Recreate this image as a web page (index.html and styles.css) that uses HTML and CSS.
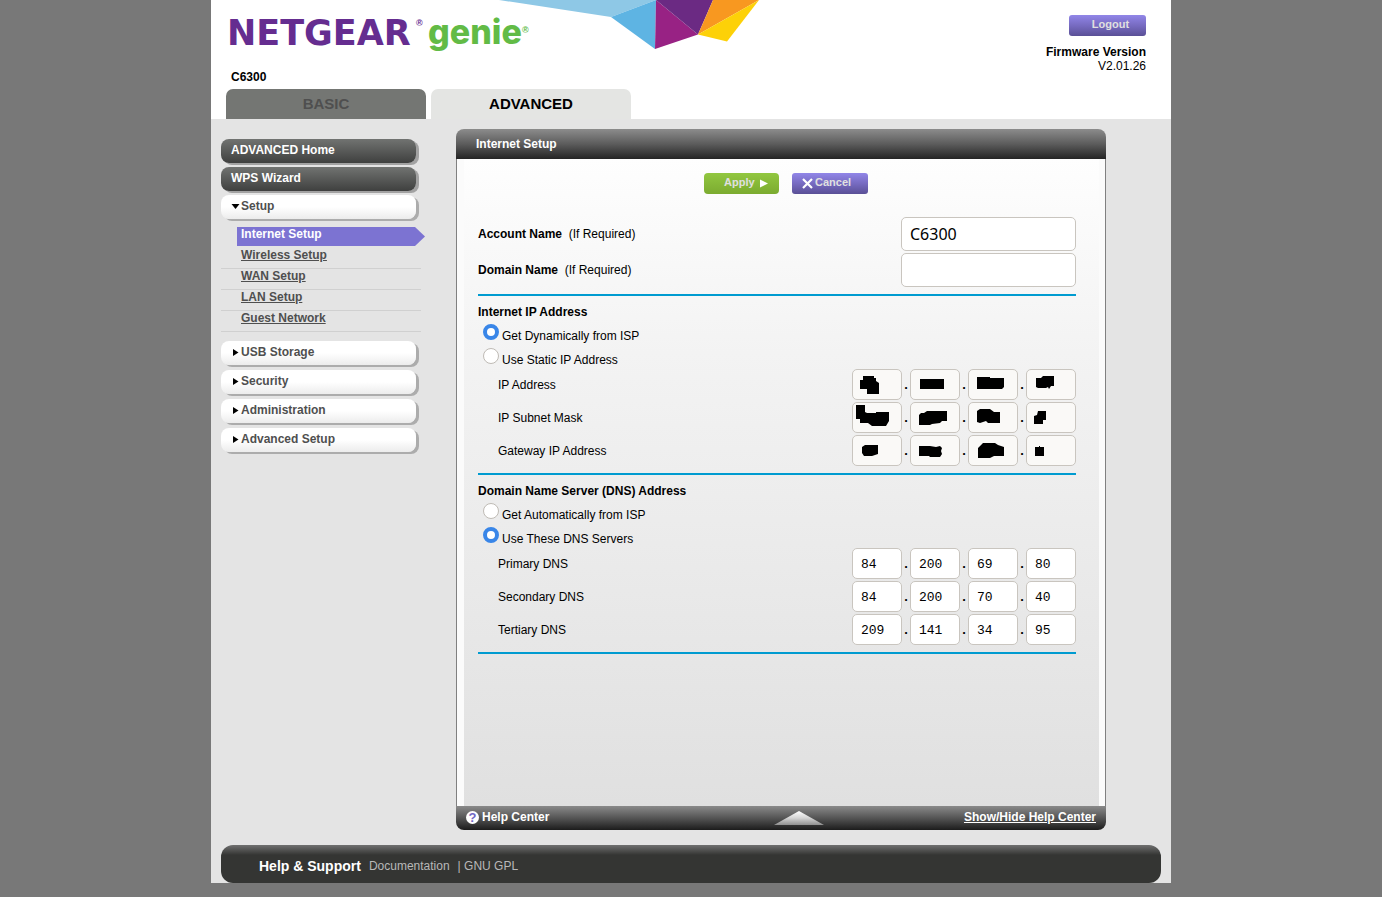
FILE: index.html
```html
<!DOCTYPE html>
<html lang="en">
<head>
<meta charset="utf-8">
<title>NETGEAR genie</title>
<link rel="stylesheet" href="styles.css">
</head>
<body>
<div class="page">
  <header class="header">
    <svg class="ribbon" width="260" height="49" viewBox="0 0 260 49" aria-hidden="true">
      <path fill="#8ec8e6" d="M0 0H157L112 17Z"/>
      <path fill="#5eb4e3" d="M112 17L157 0L156 49Z"/>
      <path fill="#982284" d="M157 0L199 34.500L156 49Z"/>
      <path fill="#6b2a83" d="M157 0H214L199 34.500Z"/>
      <path fill="#f89820" d="M214 0H260L199 34.500Z"/>
      <path fill="#fdd108" d="M260 0L228 41.500L199 34.500Z"/>
    </svg>
    <div class="brand">
      <svg class="logo" width="302" height="40" viewBox="0 0 302 40" role="img" aria-label="NETGEAR genie">
        <text class="logo-main" x="-4" y="29">NETGEAR</text>
        <text class="logo-reg logo-reg-main" x="185" y="10">®</text>
        <text class="logo-sub" x="197" y="28">genie</text>
        <text class="logo-reg logo-reg-sub" x="291" y="17">®</text>
      </svg>
      <div class="model">C6300</div>
    </div>
    <div class="session">
      <button class="btn btn-purple btn-logout" type="button">Logout</button>
      <div class="firmware"><b>Firmware Version</b><br>V2.01.26</div>
    </div>
    <nav class="tabs">
      <button class="tab" type="button">BASIC</button>
      <button class="tab tab-active" type="button">ADVANCED</button>
    </nav>
  </header>

  <div class="content">
    <nav class="side">
      <button class="side-btn side-dark" type="button">ADVANCED Home</button>
      <button class="side-btn side-dark" type="button">WPS Wizard</button>
      <button class="side-btn side-light" type="button"><svg class="caret" width="10" height="10" viewBox="0 0 10 10"><path d="M0.500 3H8.500L4.500 8Z"/></svg>Setup</button>
      <ul class="submenu">
        <li class="current"><a href="#internet">Internet Setup</a></li>
        <li><a href="#wireless">Wireless Setup</a></li>
        <li><a href="#wan">WAN Setup</a></li>
        <li><a href="#lan">LAN Setup</a></li>
        <li><a href="#guest">Guest Network</a></li>
      </ul>
      <button class="side-btn side-light" type="button"><svg class="caret" width="10" height="10" viewBox="0 0 10 10"><path d="M2 2L7.500 5.500L2 9Z"/></svg>USB Storage</button>
      <button class="side-btn side-light" type="button"><svg class="caret" width="10" height="10" viewBox="0 0 10 10"><path d="M2 2L7.500 5.500L2 9Z"/></svg>Security</button>
      <button class="side-btn side-light" type="button"><svg class="caret" width="10" height="10" viewBox="0 0 10 10"><path d="M2 2L7.500 5.500L2 9Z"/></svg>Administration</button>
      <button class="side-btn side-light" type="button"><svg class="caret" width="10" height="10" viewBox="0 0 10 10"><path d="M2 2L7.500 5.500L2 9Z"/></svg>Advanced Setup</button>
    </nav>

    <main class="panel">
      <h1 class="panel-head">Internet Setup</h1>
      <form class="panel-body">
        <div class="actions">
          <button class="btn btn-green" type="button">Apply<svg width="8" height="10" viewBox="0 0 8 10"><path fill="#fff" d="M0 0.500L8 4.500L0 8.500Z"/></svg></button>
          <button class="btn btn-purple btn-cancel" type="button"><svg width="11" height="11" viewBox="0 0 11 11"><path stroke="#fff" stroke-width="2.200" d="M1 1L10 10M10 1L1 10"/></svg>Cancel</button>
        </div>

        <section class="section names">
          <div class="row">
            <label for="account"><b>Account Name</b>&nbsp; (If Required)</label>
            <input class="text" id="account" type="text" value="C6300">
          </div>
          <div class="row">
            <label for="domain"><b>Domain Name</b>&nbsp; (If Required)</label>
            <input class="text" id="domain" type="text">
          </div>
        </section>

        <section class="section">
          <h2>Internet IP Address</h2>
          <div class="choice"><input type="radio" name="ip" id="ip-dyn" checked><label for="ip-dyn">Get Dynamically from ISP</label></div>
          <div class="choice"><input type="radio" name="ip" id="ip-static"><label for="ip-static">Use Static IP Address</label></div>
          <div class="rows">
            <div class="row">
              <label for="ip1">IP Address</label>
              <div class="octets">
                <span class="cell"><input id="ip1" type="text" disabled><svg viewBox="0 0 50 31"><path d="M11 7H22V9H24V12L27 14V25H15V20H8V11H11Z"/></svg></span><i>.</i>
                <span class="cell"><input type="text" aria-label="IP 2" disabled><svg viewBox="0 0 50 31"><path d="M10 10H34V20H10Z"/></svg></span><i>.</i>
                <span class="cell"><input type="text" aria-label="IP 3" disabled><svg viewBox="0 0 50 31"><path d="M9 8H22V9H36V18L34 20H9Z"/></svg></span><i>.</i>
                <span class="cell"><input type="text" aria-label="IP 4" disabled><svg viewBox="0 0 50 31"><path d="M10 9H15L17 7H28V17H25L23 20L22 18L20 19H12L10 18Z"/></svg></span>
              </div>
            </div>
            <div class="row">
              <label for="mask1">IP Subnet Mask</label>
              <div class="octets">
                <span class="cell"><input id="mask1" type="text" disabled><svg viewBox="0 0 50 31"><path d="M4 3H13V10L15 11H24V10H37V19L34 24H20L16 21H8V17H4Z"/></svg></span><i>.</i>
                <span class="cell"><input type="text" aria-label="Mask 2" disabled><svg viewBox="0 0 50 31"><path d="M9 13L11 11H14L17 9H37V19H32L30 21L22 22L20 23H9Z"/></svg></span><i>.</i>
                <span class="cell"><input type="text" aria-label="Mask 3" disabled><svg viewBox="0 0 50 31"><path d="M9 9L12 7H22L26 10H32V21H20L18 19L12 21L9 20Z"/></svg></span><i>.</i>
                <span class="cell"><input type="text" aria-label="Mask 4" disabled><svg viewBox="0 0 50 31"><path d="M12 9H20V18H17V22H8V14L11 13Z"/></svg></span>
              </div>
            </div>
            <div class="row">
              <label for="gw1">Gateway IP Address</label>
              <div class="octets">
                <span class="cell"><input id="gw1" type="text" disabled><svg viewBox="0 0 50 31"><path d="M10 12L13 10H26V19L20 21H12L10 18Z"/></svg></span><i>.</i>
                <span class="cell"><input type="text" aria-label="Gateway 2" disabled><svg viewBox="0 0 50 31"><path d="M9 11H20L26 12L30 11L32 13L31 16L32 19L30 22H20L19 21H9Z"/></svg></span><i>.</i>
                <span class="cell"><input type="text" aria-label="Gateway 3" disabled><svg viewBox="0 0 50 31"><path d="M10 13L15 8H27L30 10L36 12V21H26L22 23H10Z"/></svg></span><i>.</i>
                <span class="cell"><input type="text" aria-label="Gateway 4" disabled><svg viewBox="0 0 50 31"><path d="M9 12H13V11H14V12H18V21H9Z"/></svg></span>
              </div>
            </div>
          </div>
        </section>

        <section class="section">
          <h2>Domain Name Server (DNS) Address</h2>
          <div class="choice"><input type="radio" name="dns" id="dns-auto"><label for="dns-auto">Get Automatically from ISP</label></div>
          <div class="choice"><input type="radio" name="dns" id="dns-use" checked><label for="dns-use">Use These DNS Servers</label></div>
          <div class="rows">
            <div class="row">
              <label for="p1">Primary DNS</label>
              <div class="octets">
                <span class="cell"><input id="p1" type="text" value="84"></span><i>.</i>
                <span class="cell"><input type="text" aria-label="Primary 2" value="200"></span><i>.</i>
                <span class="cell"><input type="text" aria-label="Primary 3" value="69"></span><i>.</i>
                <span class="cell"><input type="text" aria-label="Primary 4" value="80"></span>
              </div>
            </div>
            <div class="row">
              <label for="s1">Secondary DNS</label>
              <div class="octets">
                <span class="cell"><input id="s1" type="text" value="84"></span><i>.</i>
                <span class="cell"><input type="text" aria-label="Secondary 2" value="200"></span><i>.</i>
                <span class="cell"><input type="text" aria-label="Secondary 3" value="70"></span><i>.</i>
                <span class="cell"><input type="text" aria-label="Secondary 4" value="40"></span>
              </div>
            </div>
            <div class="row">
              <label for="t1">Tertiary DNS</label>
              <div class="octets">
                <span class="cell"><input id="t1" type="text" value="209"></span><i>.</i>
                <span class="cell"><input type="text" aria-label="Tertiary 2" value="141"></span><i>.</i>
                <span class="cell"><input type="text" aria-label="Tertiary 3" value="34"></span><i>.</i>
                <span class="cell"><input type="text" aria-label="Tertiary 4" value="95"></span>
              </div>
            </div>
          </div>
        </section>
      </form>
      <div class="panel-foot">
        <span class="help"><span class="help-icon">?</span>Help Center</span>
        <svg class="expand" width="50" height="14" viewBox="0 0 50 14" aria-hidden="true">
          <defs><linearGradient id="up" x1="0" y1="0" x2="0" y2="1"><stop offset="0" stop-color="#fff"/><stop offset="0.500" stop-color="#d4d4d4"/><stop offset="1" stop-color="#909090"/></linearGradient></defs>
          <path fill="url(#up)" d="M25 0L50 14H0Z"/>
        </svg>
        <a class="toggle" href="#help">Show/Hide Help Center</a>
      </div>
    </main>
  </div>

  <footer class="footer">
    <b>Help &amp; Support</b>
    <a href="#docs">Documentation</a>
    <span>| <a href="#gpl">GNU GPL</a></span>
  </footer>
</div>
</body>
</html>
```
FILE: styles.css
```css
* { box-sizing: border-box; }

body {
  margin: 0;
  background: #787878;
  color: #000;
  font: 12px/14px "Liberation Sans", Arial, sans-serif;
}

button, input { margin: 0; font: inherit; }
button { cursor: pointer; }

.page {
  max-width: 960px;
  margin: 0 auto;
  background: #e4e4e4;
}

/* Header */
.header {
  position: relative;
  display: flex;
  flex-wrap: wrap;
  justify-content: space-between;
  background: #fff;
}
.ribbon { position: absolute; top: 0; left: 288px; }
.brand { padding: 16px 0 5px 20px; }
.logo { display: block; overflow: visible; margin-bottom: 14px; }
.logo-main { font: bold 35px "DejaVu Sans", sans-serif; fill: #652d90; }
.logo-sub { font: 800 34px Inter, sans-serif; fill: #62bb46; }
.logo-reg { font: bold 9px "Liberation Sans", sans-serif; }
.logo-reg-main { fill: #652d90; }
.logo-reg-sub { fill: #62bb46; }
.model { font-weight: bold; }
.session { padding: 15px 25px 0 0; text-align: right; }
.firmware { margin-top: 9px; }

.btn {
  height: 21px;
  border: 0;
  border-radius: 3px;
  color: #e0e0e0;
  font-size: 11px;
  font-weight: bold;
  line-height: 13px;
}
.btn-purple { background: linear-gradient(#9186e8, #7468bd 55%, #5a5096); }
.btn-green { border-radius: 4px; background: linear-gradient(#92c740, #7bab30); }
.btn-logout { display: block; width: 77px; margin-left: auto; padding: 0 0 2px 6px; }

.tabs { display: flex; gap: 5px; width: 100%; padding-left: 15px; }
.tab {
  width: 200px;
  height: 30px;
  padding: 0;
  border: 0;
  border-radius: 7px 7px 0 0;
  background: #747673;
  color: #4f4f4f;
  font-size: 15px;
  font-weight: bold;
}
.tab-active { background: #e4e5e3; color: #000; }

/* Content columns */
.content {
  display: flex;
  align-items: flex-start;
  gap: 35px;
  padding: 10px 65px 15px 10px;
}

.side { flex: none; width: 200px; padding-top: 10px; }
.side-btn {
  display: flex;
  align-items: center;
  width: 195px;
  height: 24px;
  margin-bottom: 4px;
  padding: 0 10px 2px;
  border: 0;
  border-radius: 8px;
  font-weight: bold;
}
.side-dark {
  background: linear-gradient(#717371, #3f403f);
  box-shadow: 3px 2px 0 #a2a2a2;
  color: #fff;
}
.side-light {
  margin-bottom: 5px;
  background: linear-gradient(#fff 50%, #ececec);
  box-shadow: 3px 2px 0 #acacac;
  color: #4f4f4f;
}
.caret { flex: none; fill: #000; }

.submenu { margin: 8px 0 9px; padding: 0; list-style: none; }
.submenu li {
  height: 21px;
  padding-left: 20px;
  border-bottom: 1px solid #d0d0d0;
}
.submenu a { color: #4f4f4f; font-weight: bold; }
.submenu .current { padding-left: 16px; border-color: transparent; }
.submenu .current a {
  display: block;
  width: 188px;
  height: 19px;
  padding-left: 4px;
  background: #7c73d2;
  clip-path: polygon(0 0, 178px 0, 100% 50%, 178px 100%, 0 100%);
  color: #fff;
  text-decoration: none;
}

/* Panel */
.panel { flex: 1; min-width: 0; }
.panel-head {
  margin: 0;
  padding: 8px 20px;
  border-radius: 8px 8px 0 0;
  background: linear-gradient(#8c8c8c, #5c5c5c 50%, #242424);
  color: #fff;
  font-size: 12px;
  line-height: 14px;
}
.panel-body {
  min-height: 647px;
  padding: 14px 29px 20px 21px;
  border: solid #808080;
  border-width: 0 1px;
  background: linear-gradient(#fefefe, #f3f3f3 30%, #e0e0e0) 7px 0 / calc(100% - 13px) 100% no-repeat #fbfbfb;
}
.actions {
  display: flex;
  justify-content: center;
  gap: 13px;
  margin-bottom: 23px;
  padding-left: 18px;
}
.actions .btn { display: flex; align-items: center; padding: 0 0 2px 20px; }
.actions .btn-green { gap: 5px; width: 75px; }
.btn-green svg, .btn-cancel svg { margin-top: 2px; }
.actions .btn-cancel { gap: 2px; width: 76px; padding-left: 10px; }

.section { padding: 9px 0 7px; border-bottom: 2px solid #009bd0; }
.names { padding-top: 0; }
.section h2 { margin: 0 0 5px; font-size: 12px; line-height: 14px; }
.row {
  display: flex;
  align-items: center;
  justify-content: space-between;
}
.row + .row { margin-top: 2px; }
.rows .row { padding-left: 20px; }

.text, .cell input {
  border: 1px solid #c9c5bf;
  border-radius: 5px;
  background: #fff;
  color: #000;
}
.text { width: 175px; height: 34px; padding: 0 8px; font: 16px "Noto Sans", sans-serif; }

.choice { display: flex; gap: 3px; height: 21px; padding-left: 5px; }
.choice + .choice { margin-top: 3px; }
.choice label { padding-top: 5px; }
.choice input {
  appearance: none;
  width: 16px;
  height: 16px;
  border: 1px solid #bfbbb5;
  border-radius: 50%;
  background: #fff;
}
.choice input:checked { border: 4px solid #3986e8; }

.octets { display: flex; }
.octets i { width: 8px; padding-top: 9px; font-style: normal; font-size: 13px; font-weight: bold; text-align: center; }
.cell { position: relative; width: 50px; height: 31px; }
.cell input {
  display: block;
  width: 100%;
  height: 100%;
  padding: 2px 8px 0;
  font: 13px "Liberation Mono", monospace;
}
.cell input:disabled { background: #faf9f7; }
.cell svg { position: absolute; inset: 0; }

.panel-foot {
  display: flex;
  align-items: center;
  justify-content: space-between;
  height: 24px;
  padding: 0 10px 2px;
  border-radius: 0 0 8px 8px;
  background: linear-gradient(#8a8a8a, #555 50%, #1c1c1c);
  color: #fff;
  font-weight: bold;
}
.help { display: flex; flex: 1; align-items: center; gap: 3px; }
.help-icon {
  width: 13px;
  height: 13px;
  border-radius: 50%;
  background: #fff;
  color: #7067c4;
  font-size: 13px;
  line-height: 13px;
  text-align: center;
}
.expand { flex: none; margin: 2px 0 0 35px; }
.toggle { flex: 1; color: #fff; text-align: right; }

/* Footer */
.footer {
  display: flex;
  align-items: center;
  gap: 8px;
  height: 38px;
  margin: 0 10px;
  padding: 3px 38px 0;
  border-radius: 12px;
  background: linear-gradient(#707070, #343533 10px);
  color: #b8b8b8;
}
.footer b { color: #fff; font-size: 14px; }
.footer a { color: inherit; text-decoration: none; }
```
